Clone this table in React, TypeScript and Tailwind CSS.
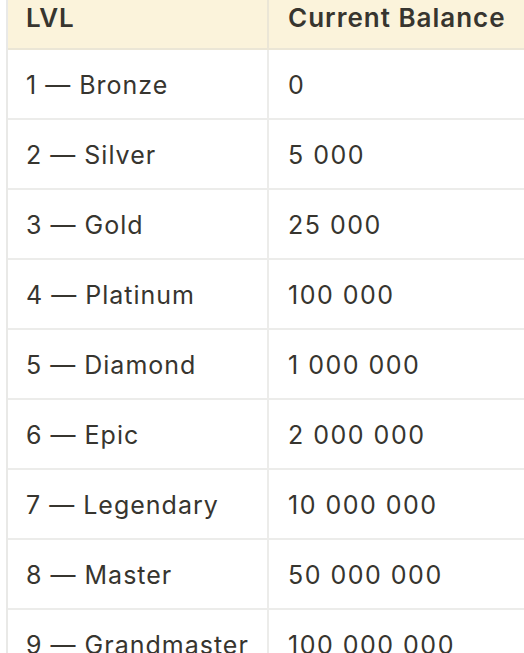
import React from "react";

const rows: [string, string][] = [
  ["1 — Bronze", "0"],
  ["2 — Silver", "5 000"],
  ["3 — Gold", "25 000"],
  ["4 — Platinum", "100 000"],
  ["5 — Diamond", "1 000 000"],
  ["6 — Epic", "2 000 000"],
  ["7 — Legendary", "10 000 000"],
  ["8 — Master", "50 000 000"],
  ["9 — Grandmaster", "100 000 000"],
];

export default function App() {
  return (
    <div
      className="w-[524px] h-[653px] overflow-hidden bg-white pl-[6px]"
      style={{ fontFamily: "Inter, 'Noto Sans', sans-serif" }}
    >
      <div className="-mt-[20px] w-[600px] border-l-2 border-[#e9e9e7] text-[#37352f]">
        <div className="flex h-[70px] bg-[#fbf3db] border-b-2 border-[#ebe6d6]">
          <div className="w-[261px] shrink-0 border-r-2 border-[#ebe6d6] pl-[18px] flex items-center pt-[6px] text-[26px] font-semibold tracking-[0.6px]">
            LVL
          </div>
          <div className="flex-1 pl-[19px] flex items-center pt-[6px] text-[26px] font-semibold tracking-[1px]">
            Current Balance
          </div>
        </div>
        {rows.map(([a, b]) => (
          <div key={a} className="flex h-[70px] border-b-2 border-[#ececea]">
            <div className="w-[261px] shrink-0 border-r-2 border-[#ececea] pl-[18px] flex items-center pt-[4px] text-[25px] tracking-[1px]">
              {a}
            </div>
            <div className="flex-1 pl-[19px] flex items-center pt-[4px] text-[25px] tracking-[1.5px]">
              {b}
            </div>
          </div>
        ))}
      </div>
    </div>
  );
}
